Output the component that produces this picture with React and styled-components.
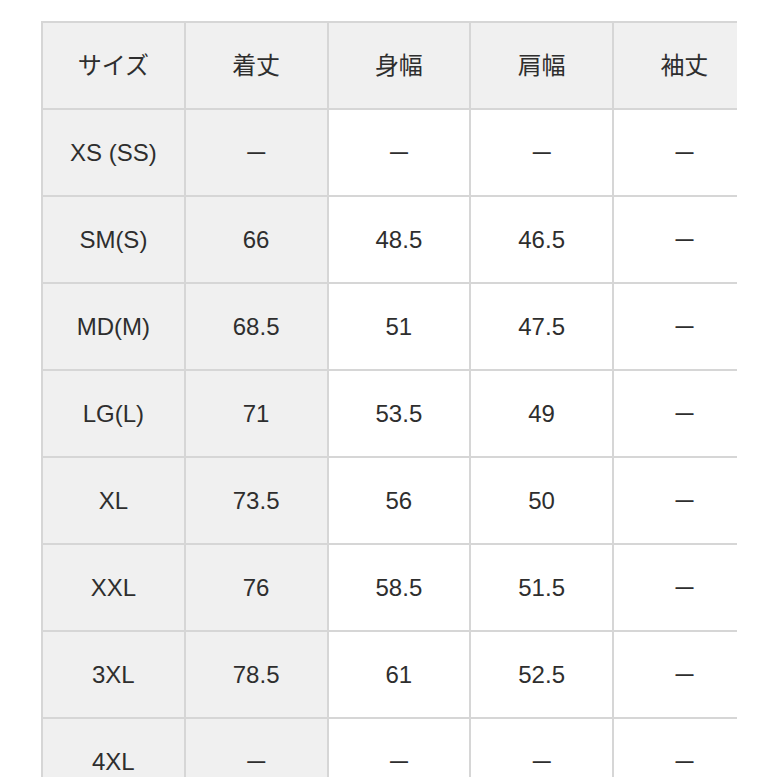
import React from "react"
import styled, { createGlobalStyle } from "styled-components"

const GlobalStyle = createGlobalStyle`
  html, body {
    margin: 0;
    padding: 0;
    background: #ffffff;
  }
`

const Page = styled.div`
  padding: 21px 0 0 41px;
  height: 777px;
  box-sizing: border-box;
  overflow: hidden;
`

const Clip = styled.div`
  width: 696px;
  overflow: hidden;
`

const Grid = styled.div`
  display: grid;
  grid-template-columns: repeat(5, 140.75px);
  grid-auto-rows: 85px;
  gap: 2px;
  padding: 2px 0 0 2px;
  width: max-content;
  background: #d6d6d6;
`

const Cell = styled.div`
  display: flex;
  align-items: center;
  justify-content: center;
  box-sizing: border-box;
  padding-bottom: ${p => (p.$head ? "5px" : "0")};
  background: ${p => (p.$shaded ? "#f0f0f0" : "#ffffff")};
  color: #2e2e2e;
  font-family: "Liberation Sans", "Noto Sans CJK JP", sans-serif;
  font-size: 24px;
  white-space: nowrap;
`

const Dash = styled.span`
  font-size: 18px;
  font-weight: 700;
  color: #2e2e2e;
`

const headers = ["サイズ", "着丈", "身幅", "肩幅", "袖丈"]

const rows = [
  ["XS (SS)", "-", "-", "-", "-"],
  ["SM(S)", "66", "48.5", "46.5", "-"],
  ["MD(M)", "68.5", "51", "47.5", "-"],
  ["LG(L)", "71", "53.5", "49", "-"],
  ["XL", "73.5", "56", "50", "-"],
  ["XXL", "76", "58.5", "51.5", "-"],
  ["3XL", "78.5", "61", "52.5", "-"],
  ["4XL", "-", "-", "-", "-"],
]

const App = () => (
  <Page>
    <GlobalStyle />
    <Clip>
      <Grid>
        {headers.map(h => (
          <Cell key={h} $shaded $head>{h}</Cell>
        ))}
        {rows.map(row =>
          row.map((v, i) => (
            <Cell key={row[0] + i} $shaded={i < 2}>
              {v === "-" ? <Dash>—</Dash> : v}
            </Cell>
          ))
        )}
      </Grid>
    </Clip>
  </Page>
)

export default App
